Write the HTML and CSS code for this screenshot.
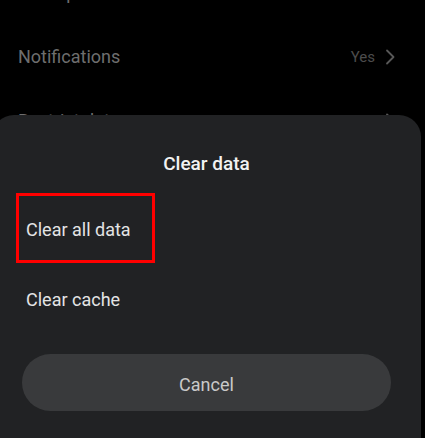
FILE: index.html
```html
<!DOCTYPE html>
<html>
  <head>
    <title>Clear data</title>
    <link rel="stylesheet" href="styles.css">
  </head>
  <body>
    <!-- settings list behind the sheet -->
    <div class="list">
      <div class="row">
        <span class="label">Other permissions</span>
      </div>
      <div class="row">
        <span class="label">Notifications</span>
        <span class="value">Yes</span>
        <svg class="chevron" width="10" height="16" viewBox="0 0 10 16">
          <path d="M2 1.5 L8.5 8 L2 14.5" />
        </svg>
      </div>
      <div class="row">
        <span class="label">Restrict data usage</span>
        <span class="value">Don't allow</span>
        <svg class="chevron" width="10" height="16" viewBox="0 0 10 16">
          <path d="M2 1.5 L8.5 8 L2 14.5" />
        </svg>
      </div>
    </div>

    <!-- bottom sheet -->
    <div class="sheet">
      <div class="sheet-title">Clear data</div>
      <div class="options">
        <div class="option highlight">Clear all data</div>
        <div class="option">Clear cache</div>
      </div>
      <div class="cancel">Cancel</div>
    </div>
  </body>
</html>
```

FILE: styles.css
```css
body {
  margin: 0;
  height: 438px;
  background: #000;
  font-family: Roboto, "Noto Sans", Arial, sans-serif;
  overflow: hidden;
  position: relative;
}
* {
  box-sizing: border-box;
}
.list {
  margin-top: -39px;
  padding: 0 30px 0 18px;
}
.row {
  height: 64px;
  display: flex;
  align-items: center;
}
.label {
  flex: 1;
  font-size: 18px;
  line-height: 24px;
  color: #6e6e6e;
}
.value {
  font-size: 15px;
  line-height: 24px;
  color: #4c4c4c;
  margin-right: 10px;
}
.chevron path {
  fill: none;
  stroke: #585858;
  stroke-width: 1.8;
  stroke-linecap: round;
  stroke-linejoin: round;
}
.sheet {
  position: absolute;
  top: 115px;
  left: -8px;
  width: 429px;
  bottom: 0;
  background: #212224;
  border-radius: 22px 22px 0 0;
  padding-top: 37px;
}
.sheet-title {
  text-align: center;
  font-size: 19px;
  line-height: 24px;
  font-weight: 500;
  color: #f2f2f2;
  margin-bottom: 17px;
}
.options {
  padding: 0 24px;
}
.option {
  width: 139px;
  border: 3px solid transparent;
  padding: 22px 7px 18px;
  font-size: 18px;
  line-height: 24px;
  color: #e4e4e4;
  white-space: nowrap;
}
.option.highlight {
  border-color: #ff0000;
}
.cancel {
  margin: 21px 30px 0;
  height: 57px;
  border-radius: 29px;
  background: #393a3c;
  color: #c9c9c9;
  font-size: 18px;
  line-height: 24px;
  text-align: center;
  padding-top: 19px;
}
```
